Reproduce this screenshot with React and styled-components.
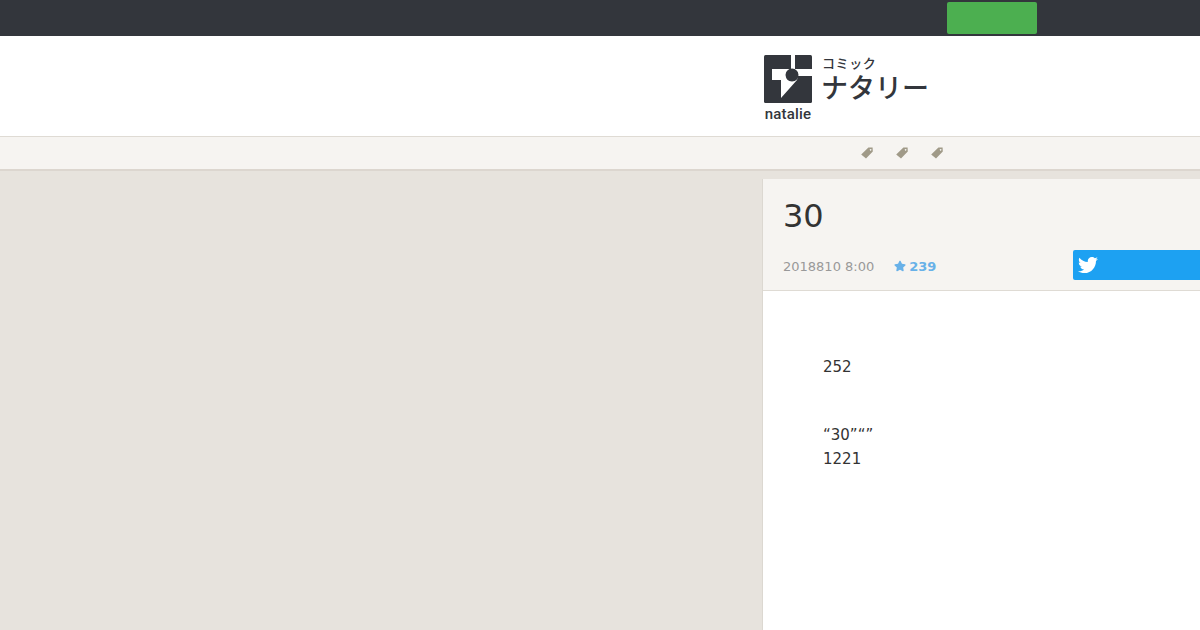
import React from 'react';
import styled, { createGlobalStyle } from 'styled-components';
import { FaTwitter, FaStar } from 'react-icons/fa';

const GlobalStyle = createGlobalStyle`
  html, body {
    margin: 0;
    height: 630px;
    overflow: hidden;
    background: #e7e3dd;
    font-family: "DejaVu Sans", sans-serif;
  }
`;

const TagIcon = () => (
  <svg width="14" height="14" viewBox="0 0 14 14">
    <path
      fill="#a09a88"
      fillRule="evenodd"
      d="M8.4 1.4 L12.6 1.4 L12.8 5.6 L6 12.6 L1.2 8.4 Z M10.6 3 a0.8 0.8 0 1 0 0.01 0 Z"
    />
  </svg>
);

const LogoMark = () => (
  <svg width="48" height="48" viewBox="0 0 48 48">
    <rect width="48" height="48" rx="1.5" fill="#33363c" />
    <path fill="#fff" d="M8 14 H27 V0 H31 V14 H48 V21 H34 L33 25 L17 43 V25 H8 Z" />
    <path
      fill="#33363c"
      d="M28 13.5 Q34 14 34.5 20 Q34 26 28 26.5 Q22 26 21.5 20 Q22 14 28 13.5 Z"
    />
  </svg>
);

const TopBar = styled.div`
  height: 36px;
  background: #33363c;
  display: flex;
  padding-left: 947px;
  align-items: center;
`;

const GreenButton = styled.div`
  width: 90px;
  height: 32px;
  background: #4caf50;
  border-radius: 2px;
`;

const Header = styled.header`
  height: 100px;
  background: #fff;
  border-bottom: 1px solid #dfdbd4;
  padding-left: 764px;
  display: flex;
  align-items: flex-start;
`;

const Logo = styled.div`
  display: flex;
  gap: 10px;
  padding-top: 19px;
`;

const MarkColumn = styled.div`
  display: flex;
  flex-direction: column;
  align-items: center;
`;

const Natalie = styled.span`
  font-family: "Roboto", "Liberation Sans", sans-serif;
  font-weight: 500;
  font-size: 15px;
  line-height: 22px;
  letter-spacing: 0.2px;
  color: #33363c;
`;

const LogoText = styled.div`
  display: flex;
  flex-direction: column;
  font-family: "Noto Sans CJK JP", sans-serif;
  color: #33363c;
`;

const SmallKana = styled.span`
  font-size: 13px;
  line-height: 16px;
  letter-spacing: 0.6px;
  font-weight: 500;
`;

const BigKana = styled.span`
  font-size: 27px;
  line-height: 32px;
  margin-left: -1px;
  font-weight: 500;
`;

const Nav = styled.nav`
  height: 32px;
  background: #f6f4f1;
  border-bottom: 2px solid #dcd6cf;
  padding-left: 860px;
  display: flex;
  gap: 21px;
  align-items: center;
`;

const Main = styled.main`
  padding: 8px 0 0 762px;
`;

const Article = styled.article`
  width: 438px;
  height: 451px;
  background: #fff;
  border-left: 1px solid #dcd8d1;
  box-sizing: border-box;
`;

const ArticleHead = styled.div`
  height: 112px;
  background: #f6f4f1;
  border-bottom: 1px solid #dfdbd4;
  box-sizing: border-box;
  padding: 18px 0 0 20px;
`;

const Title = styled.h1`
  margin: 0;
  font-size: 32px;
  line-height: 38px;
  font-weight: 400;
  color: #333;
`;

const Meta = styled.div`
  display: flex;
  align-items: center;
  margin-top: 15px;
  height: 30px;
`;

const DateText = styled.span`
  font-size: 13px;
  color: #999;
  margin-right: 20px;
  position: relative;
  top: 1px;
`;

const Stars = styled.span`
  display: flex;
  align-items: center;
  gap: 3px;
  font-size: 13px;
  font-weight: 700;
  color: #68b1e8;
  position: relative;
  top: 1px;
`;

const TweetButton = styled.div`
  margin-left: auto;
  width: 127px;
  height: 30px;
  background: #1da1f2;
  border-radius: 2px 0 0 2px;
  color: #fff;
  display: flex;
  align-items: center;
  padding-left: 5px;
  box-sizing: border-box;
`;

const Body = styled.div`
  padding: 64px 0 0 60px;
  font-size: 15px;
  line-height: 24px;
  color: #333;
`;

const Paragraph = styled.p`
  margin: 0 0 44px;
`;

export default function App() {
  return (
    <>
      <GlobalStyle />
      <TopBar>
        <GreenButton />
      </TopBar>
      <Header>
        <Logo>
          <MarkColumn>
            <LogoMark />
            <Natalie>natalie</Natalie>
          </MarkColumn>
          <LogoText>
            <SmallKana>コミック</SmallKana>
            <BigKana>ナタリー</BigKana>
          </LogoText>
        </Logo>
      </Header>
      <Nav>
        <TagIcon />
        <TagIcon />
        <TagIcon />
      </Nav>
      <Main>
        <Article>
          <ArticleHead>
            <Title>30</Title>
            <Meta>
              <DateText>2018810 8:00</DateText>
              <Stars>
                <FaStar size={12} />
                239
              </Stars>
              <TweetButton>
                <FaTwitter size={20} />
              </TweetButton>
            </Meta>
          </ArticleHead>
          <Body>
            <Paragraph>252</Paragraph>
            <Paragraph>
              “30”“”
              <br />
              1221
            </Paragraph>
          </Body>
        </Article>
      </Main>
    </>
  );
}
